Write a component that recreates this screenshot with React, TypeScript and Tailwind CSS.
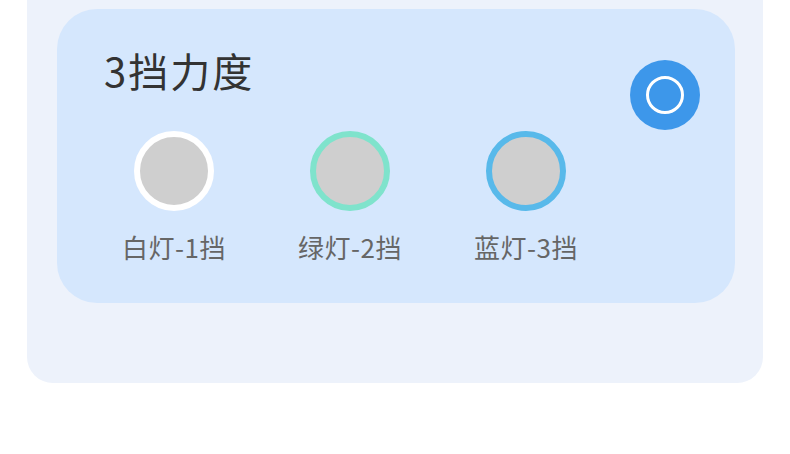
import React from "react";

const lights = [
  { label: "白灯-1挡", ring: "border-white" },
  { label: "绿灯-2挡", ring: "border-[#7fe3cc]" },
  { label: "蓝灯-3挡", ring: "border-[#58b9ea]" },
];

export default function App() {
  return (
    <div
      className="w-[790px] h-[454px] bg-white"
      style={{ fontFamily: '"Noto Sans CJK SC", "Noto Sans", sans-serif' }}
    >
      <div className="ml-[27px] w-[736px] h-[383px] bg-[#edf2fb] rounded-b-[26px] pl-[30px] pr-[28px] pt-[9px]">
        <div className="h-[294px] bg-[#d5e7fd] rounded-[40px] flex justify-between">
          <div className="flex flex-col">
            <h1 className="pl-[47px] pt-[33px] text-[40px] leading-[56px] tracking-[2px] text-[#333333] font-normal">
              3挡力度
            </h1>
            <div className="flex gap-[56px] pl-[57px] mt-[33px]">
              {lights.map((l) => (
                <div key={l.label} className="w-[120px] flex flex-col items-center">
                  <div
                    className={`w-[80px] h-[80px] rounded-full border-[6px] ${l.ring} bg-[#cfcfcf]`}
                  />
                  <span className="mt-[18px] text-[26px] leading-[36px] tracking-[0.5px] text-[#666666] whitespace-nowrap">
                    {l.label}
                  </span>
                </div>
              ))}
            </div>
          </div>
          <button
            type="button"
            className="mt-[51px] mr-[35px] w-[70px] h-[70px] rounded-full bg-[#3d97ea] flex items-center justify-center"
          >
            <span className="w-[38px] h-[38px] rounded-full border-[3px] border-white" />
          </button>
        </div>
      </div>
    </div>
  );
}
